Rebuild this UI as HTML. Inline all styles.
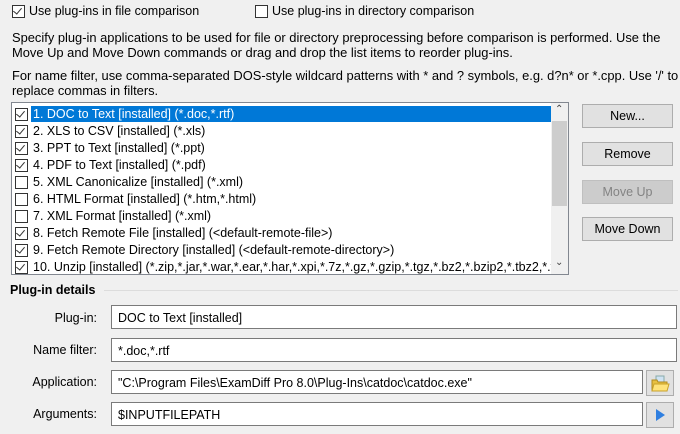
<!DOCTYPE html><html><head><style>
body{margin:0;width:680px;height:434px;background:#f0f0f0;font:12.5px "Liberation Sans",sans-serif;color:#000;position:relative;overflow:hidden}
.a{position:absolute;white-space:nowrap}
.cb{position:absolute;width:11px;height:11px;border:1px solid #333;background:#fff}
.cb.c::after{content:"";position:absolute;left:2px;top:0px;width:4px;height:7px;border:solid #333;border-width:0 1.5px 1.5px 0;transform:rotate(40deg)}
.btn{position:absolute;left:582px;width:89px;height:22px;border:1px solid #adadad;background:#e1e1e1;text-align:center;line-height:22px}
.inp{position:absolute;left:111px;height:24px;border:1px solid #7a7a7a;background:#fff;line-height:24px;padding-left:6px;box-sizing:border-box}
.lbl{position:absolute;width:97px;text-align:right}
.row{position:absolute;left:15px;height:17px;line-height:16px}
.row .cb{left:0;top:2px}
.row span{position:absolute;left:16px;padding:0 2px}
.p{font-size:12.9px;line-height:15px}
</style></head><body>
<div class="cb c" style="left:12px;top:5px"></div><div class="a" style="left:29px;top:4px">Use plug-ins in file comparison</div>
<div class="cb" style="left:255px;top:5px"></div><div class="a" style="left:272px;top:4px">Use plug-ins in directory comparison</div>
<div class="a p" style="left:12px;top:30px">Specify plug-in applications to be used for file or directory preprocessing before comparison is performed. Use the<br>Move Up and Move Down commands or drag and drop the list items to reorder plug-ins.</div>
<div class="a p" style="left:12px;top:68px">For name filter, use comma-separated DOS-style wildcard patterns with * and ? symbols, e.g. d?n* or *.cpp. Use '/' to<br>replace commas in filters.</div>
<div class="a" style="left:11px;top:102px;width:556px;height:171px;border:1px solid #828790;background:#fff;overflow:hidden">
<div style="position:absolute;left:19px;top:3px;width:520px;height:16px;background:#0078d7"></div>
<div class="row" style="top:3px;left:3px"><div class="cb c"></div><span style="color:#fff">1. DOC to Text [installed] (*.doc,*.rtf)</span></div>
<div class="row" style="top:20px;left:3px"><div class="cb c"></div><span>2. XLS to CSV [installed] (*.xls)</span></div>
<div class="row" style="top:37px;left:3px"><div class="cb c"></div><span>3. PPT to Text [installed] (*.ppt)</span></div>
<div class="row" style="top:54px;left:3px"><div class="cb c"></div><span>4. PDF to Text [installed] (*.pdf)</span></div>
<div class="row" style="top:71px;left:3px"><div class="cb"></div><span>5. XML Canonicalize [installed] (*.xml)</span></div>
<div class="row" style="top:88px;left:3px"><div class="cb"></div><span>6. HTML Format [installed] (*.htm,*.html)</span></div>
<div class="row" style="top:105px;left:3px"><div class="cb"></div><span>7. XML Format [installed] (*.xml)</span></div>
<div class="row" style="top:122px;left:3px"><div class="cb c"></div><span>8. Fetch Remote File [installed] (&lt;default-remote-file&gt;)</span></div>
<div class="row" style="top:139px;left:3px"><div class="cb c"></div><span>9. Fetch Remote Directory [installed] (&lt;default-remote-directory&gt;)</span></div>
<div class="row" style="top:156px;left:3px"><div class="cb c"></div><span>10. Unzip [installed] (*.zip,*.jar,*.war,*.ear,*.har,*.xpi,*.7z,*.gz,*.gzip,*.tgz,*.bz2,*.bzip2,*.tbz2,*.tbz</span></div>
<div style="position:absolute;left:539px;top:0;width:17px;height:171px;background:#f0f0f0"></div>
<div style="position:absolute;left:540px;top:18px;width:15px;height:85px;background:#cdcdcd"></div>
<div class="a" style="left:543px;top:1px;font-size:10px;color:#444">&#8963;</div>
<div class="a" style="left:543px;top:154px;font-size:10px;color:#444">&#8964;</div>
</div>
<div class="btn" style="top:104px">New...</div>
<div class="btn" style="top:142px">Remove</div>
<div class="btn" style="top:180px;border-color:#bfbfbf;background:#cccccc;color:#838383">Move Up</div>
<div class="btn" style="top:217px">Move Down</div>
<div class="a" style="left:10px;top:283px;font-weight:bold">Plug-in details</div>
<div class="a" style="left:104px;top:290px;width:574px;height:1px;background:#dcdcdc"></div>
<div class="lbl" style="top:311px">Plug-in:</div><div class="inp" style="top:305px;width:566px">DOC to Text [installed]</div>
<div class="lbl" style="top:343px">Name filter:</div><div class="inp" style="top:338px;width:566px">*.doc,*.rtf</div>
<div class="lbl" style="top:375px">Application:</div><div class="inp" style="top:370px;width:532px">"C:\Program Files\ExamDiff Pro 8.0\Plug-Ins\catdoc\catdoc.exe"</div>
<div class="lbl" style="top:407px">Arguments:</div><div class="inp" style="top:402px;width:532px">$INPUTFILEPATH</div>
<div class="a" style="left:646px;top:370px;width:26px;height:24px;border:1px solid #adadad;background:#e1e1e1">
<svg width="26" height="24"><rect x="9" y="5" width="8" height="6" fill="#cfe3f3" stroke="#8aa"/><path d="M5 9h5l1 2h9v9H5z" fill="#e8c040" stroke="#b08a20"/><path d="M5 20l2-7h15l-2 7z" fill="#ffe37a" stroke="#c9a22a"/></svg></div>
<div class="a" style="left:646px;top:402px;width:26px;height:24px;border:1px solid #adadad;background:#e1e1e1">
<svg width="26" height="24"><path d="M9 6l9 6-9 6z" fill="#2f7fe0"/></svg></div>
</body></html>
